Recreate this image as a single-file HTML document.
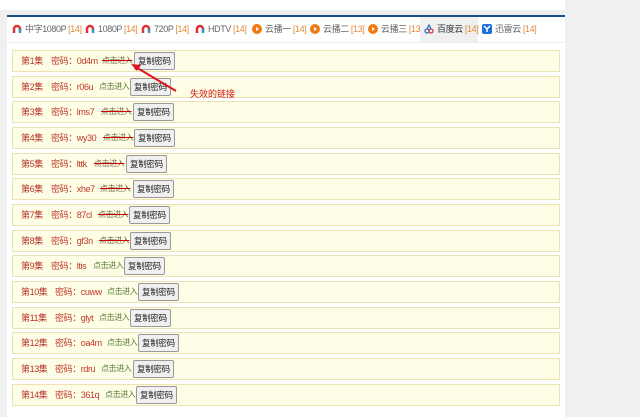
<!DOCTYPE html>
<html><head><meta charset="utf-8"><style>
body{margin:0;width:640px;height:400px;background:#f0f0f0;position:relative;overflow:hidden;font-family:"Liberation Sans","Noto Sans CJK SC",sans-serif;}
.top{position:absolute;left:0;top:0;width:565px;height:10px;background:#fff}
.panel{position:absolute;left:7px;top:15px;width:558px;height:400px;background:#fff;border-top:2px solid #1c4e86}
.tabs{position:absolute;left:7px;top:17px;width:558px;height:25px;border-bottom:1px solid #eee;font-size:9px;letter-spacing:-0.4px;color:#666}
.tab{position:absolute;top:0;height:25px;line-height:25px;white-space:nowrap}
.tab b{font-weight:normal;color:#e08a3a}
.ic{display:inline-block;width:10px;height:10px;vertical-align:-2px;margin-right:3px}
.row{position:absolute;left:12px;width:546px;height:20px;background:#fefde6;border:1px solid #ece3b4;font-size:9px;letter-spacing:-0.4px;line-height:20px;white-space:nowrap}
.row span{position:absolute;top:0}
.ep{left:8px;color:#b8352c}
.pw{color:#c0392b}
.lk{color:#5a7a3a;font-size:8px}
.lk.x{text-decoration:line-through;text-decoration-color:#c00;color:#7a6a4a}
.bt{top:1px!important;height:16px;line-height:16px;border:1px solid #999;background:#f0f0f0;border-radius:2px;padding:0 3px;color:#222;font-size:8.5px;letter-spacing:-0.3px}
</style></head><body>
<div class="top"></div>
<div class="panel"></div>
<div class="tabs">
<div class="tab" style="left:5px"><svg class="ic" viewBox="0 0 10 10"><path d="M2 9 L2 5 A3 3 0 0 1 8 5 L8 7" stroke="#d33" stroke-width="2.5" fill="none"/><path d="M8 5 L8 9" stroke="#39c" stroke-width="2.5"/></svg>中字1080P <b>[14]</b></div>
<div class="tab" style="left:78px"><svg class="ic" viewBox="0 0 10 10"><path d="M2 9 L2 5 A3 3 0 0 1 8 5 L8 7" stroke="#d33" stroke-width="2.5" fill="none"/><path d="M8 5 L8 9" stroke="#39c" stroke-width="2.5"/></svg>1080P <b>[14]</b></div>
<div class="tab" style="left:134px"><svg class="ic" viewBox="0 0 10 10"><path d="M2 9 L2 5 A3 3 0 0 1 8 5 L8 7" stroke="#d33" stroke-width="2.5" fill="none"/><path d="M8 5 L8 9" stroke="#39c" stroke-width="2.5"/></svg>720P <b>[14]</b></div>
<div class="tab" style="left:188px"><svg class="ic" viewBox="0 0 10 10"><path d="M2 9 L2 5 A3 3 0 0 1 8 5 L8 7" stroke="#d33" stroke-width="2.5" fill="none"/><path d="M8 5 L8 9" stroke="#39c" stroke-width="2.5"/></svg>HDTV <b>[14]</b></div>
<div class="tab" style="left:245px"><svg class="ic" viewBox="0 0 10 10"><circle cx="5" cy="5" r="5" fill="#f07a12"/><path d="M4 3 L7 5 L4 7Z" fill="#fff"/></svg>云播一 <b>[14]</b></div>
<div class="tab" style="left:303px"><svg class="ic" viewBox="0 0 10 10"><circle cx="5" cy="5" r="5" fill="#f07a12"/><path d="M4 3 L7 5 L4 7Z" fill="#fff"/></svg>云播二 <b>[13]</b></div>
<div class="tab" style="left:361px"><svg class="ic" viewBox="0 0 10 10"><circle cx="5" cy="5" r="5" fill="#f07a12"/><path d="M4 3 L7 5 L4 7Z" fill="#fff"/></svg>云播三 <b>[13]</b></div>
<div class="tab" style="left:413px;width:58px;background:#f0f0f0;padding-left:4px;box-sizing:border-box"><svg class="ic" viewBox="0 0 10 10"><circle cx="3" cy="7" r="2" fill="none" stroke="#2a6cd0" stroke-width="1.3"/><circle cx="7" cy="7" r="2" fill="none" stroke="#d33" stroke-width="1.3"/><path d="M3 5 L5 1 L7 5" stroke="#2a6cd0" fill="none" stroke-width="1.3"/></svg><span style="color:#333">百度云</span> <b>[14]</b></div>
<div class="tab" style="left:475px"><svg class="ic" viewBox="0 0 10 10"><rect width="10" height="10" rx="2" fill="#1e6fd9"/><path d="M2 2 L5 5 L8 2 M5 5 L5 8" stroke="#fff" stroke-width="1.5" fill="none"/></svg>迅雷云 <b>[14]</b></div>
</div>

<div class="row" style="top:50px"><span class="ep">第1集</span><span class="pw" style="left:38px">密码：0d4m</span><span class="lk x" style="left:89px">点击进入</span><span class="bt" style="left:121px">复制密码</span></div>
<div class="row" style="top:76px"><span class="ep">第2集</span><span class="pw" style="left:38px">密码：r06u</span><span class="lk" style="left:86px">点击进入</span><span class="bt" style="left:117px">复制密码</span></div>
<div class="row" style="top:101px"><span class="ep">第3集</span><span class="pw" style="left:38px">密码：lms7</span><span class="lk x" style="left:88px">点击进入</span><span class="bt" style="left:120px">复制密码</span></div>
<div class="row" style="top:127px"><span class="ep">第4集</span><span class="pw" style="left:38px">密码：wy30</span><span class="lk x" style="left:90px">点击进入</span><span class="bt" style="left:121px">复制密码</span></div>
<div class="row" style="top:153px"><span class="ep">第5集</span><span class="pw" style="left:38px">密码：lttk</span><span class="lk x" style="left:81px">点击进入</span><span class="bt" style="left:113px">复制密码</span></div>
<div class="row" style="top:178px"><span class="ep">第6集</span><span class="pw" style="left:38px">密码：xhe7</span><span class="lk x" style="left:87px">点击进入</span><span class="bt" style="left:120px">复制密码</span></div>
<div class="row" style="top:204px"><span class="ep">第7集</span><span class="pw" style="left:38px">密码：87cl</span><span class="lk x" style="left:85px">点击进入</span><span class="bt" style="left:116px">复制密码</span></div>
<div class="row" style="top:230px"><span class="ep">第8集</span><span class="pw" style="left:38px">密码：gf3n</span><span class="lk x" style="left:86px">点击进入</span><span class="bt" style="left:117px">复制密码</span></div>
<div class="row" style="top:255px"><span class="ep">第9集</span><span class="pw" style="left:38px">密码：ltis</span><span class="lk" style="left:80px">点击进入</span><span class="bt" style="left:111px">复制密码</span></div>
<div class="row" style="top:281px"><span class="ep">第10集</span><span class="pw" style="left:42px">密码：cuww</span><span class="lk" style="left:94px">点击进入</span><span class="bt" style="left:125px">复制密码</span></div>
<div class="row" style="top:307px"><span class="ep">第11集</span><span class="pw" style="left:42px">密码：glyt</span><span class="lk" style="left:86px">点击进入</span><span class="bt" style="left:117px">复制密码</span></div>
<div class="row" style="top:332px"><span class="ep">第12集</span><span class="pw" style="left:42px">密码：oa4m</span><span class="lk" style="left:94px">点击进入</span><span class="bt" style="left:125px">复制密码</span></div>
<div class="row" style="top:358px"><span class="ep">第13集</span><span class="pw" style="left:42px">密码：rdru</span><span class="lk" style="left:88px">点击进入</span><span class="bt" style="left:120px">复制密码</span></div>
<div class="row" style="top:384px"><span class="ep">第14集</span><span class="pw" style="left:42px">密码：361q</span><span class="lk" style="left:92px">点击进入</span><span class="bt" style="left:123px">复制密码</span></div>

<svg style="position:absolute;left:0;top:0" width="640" height="400"><path d="M176 91 L134 66" stroke="#e0141e" stroke-width="2"/><path d="M131 64 L141 65 L137 71Z" fill="#e0141e"/></svg>
<div style="position:absolute;left:190px;top:87px;font-size:9px;color:#d01a1a">失效的链接</div>
</body></html>
